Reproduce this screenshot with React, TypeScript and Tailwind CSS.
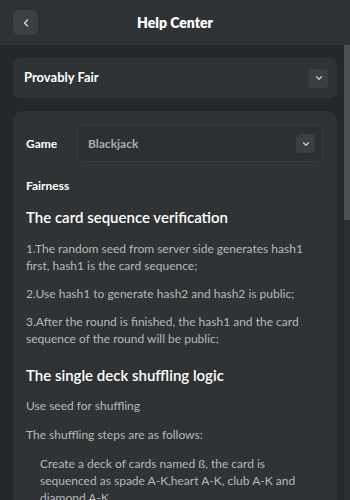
import { ChevronDown, ChevronLeft } from "lucide-react";

const font = { fontFamily: "Lato, 'Noto Sans', sans-serif" };

const Chevron = ({ size = "h-[19px] w-[19px]" }: { size?: string }) => (
  <div className={`flex ${size} items-center justify-center rounded bg-[#393e40]`}>
    <ChevronDown className="h-2.5 w-2.5 text-[#c9cccd]" strokeWidth={3} />
  </div>
);

const App = () => {
  return (
    <div className="flex h-[500px] w-[350px] flex-col overflow-hidden bg-[#24282a]" style={font}>
      <header className="relative flex h-[45px] shrink-0 items-center justify-center bg-[#2e3234]">
        <button className="absolute left-[13px] top-[10px] flex h-[25px] w-[25px] items-center justify-center rounded-md bg-[#3b4042]">
          <ChevronLeft className="h-3 w-3 text-[#d0d3d4]" strokeWidth={3} />
        </button>
        <h1 className="text-[14px] font-extrabold text-white">Help Center</h1>
      </header>

      <div className="flex min-h-0 flex-1">
        <main className="flex-1 overflow-hidden pl-[13px] pr-[7px] pt-[13px]">
          <div className="flex h-[40px] items-center justify-between rounded-md bg-[#2f3335] pl-[11px] pr-[9px]">
            <span className="text-[13px] font-bold text-white">Provably Fair</span>
            <Chevron />
          </div>

          <section className="mt-[13px] rounded-[10px] bg-[#2f3335] pl-[13px] pr-[14px] pt-[14px] pb-6">
            <div className="flex items-center">
              <span className="w-[51px] text-[12px] font-bold text-white">Game</span>
              <div className="flex h-[37px] flex-1 items-center justify-between rounded border border-[#363b3d] bg-[#2c3032] pl-[10px] pr-[7px]">
                <span className="text-[12px] font-bold text-[#a9adaf]">Blackjack</span>
                <Chevron />
              </div>
            </div>

            <h3 className="mt-[15px] text-[12px] font-bold text-white">Fairness</h3>

            <h2 className="mt-[11px] text-[15px] font-semibold text-white">The card sequence verification</h2>
            <div className="mt-[11px] space-y-[11px] text-[12px] leading-[17px] text-[#b5b9ba]">
              <p>1.The random seed from server side generates hash1 first, hash1 is the card sequence;</p>
              <p>2.Use hash1 to generate hash2 and hash2 is public;</p>
              <p>3.After the round is finished, the hash1 and the card sequence of the round will be public;</p>
            </div>

            <h2 className="mt-[17px] text-[15px] font-semibold text-white">The single deck shuffling logic</h2>
            <div className="mt-[11px] space-y-[12px] text-[12px] leading-[17px] text-[#b5b9ba]">
              <p>Use seed for shuffling</p>
              <p>The shuffling steps are as follows:</p>
              <p className="pl-[14px]">
                Create a deck of cards named ß, the card is sequenced as spade A-K,heart A-K, club A-K and diamond A-K
              </p>
            </div>
          </section>
        </main>
        <div className="w-[6px] shrink-0 bg-[#2a2e30]">
          <div className="h-[175px] bg-[#4b5052]" />
        </div>
      </div>
    </div>
  );
};

export default App;
